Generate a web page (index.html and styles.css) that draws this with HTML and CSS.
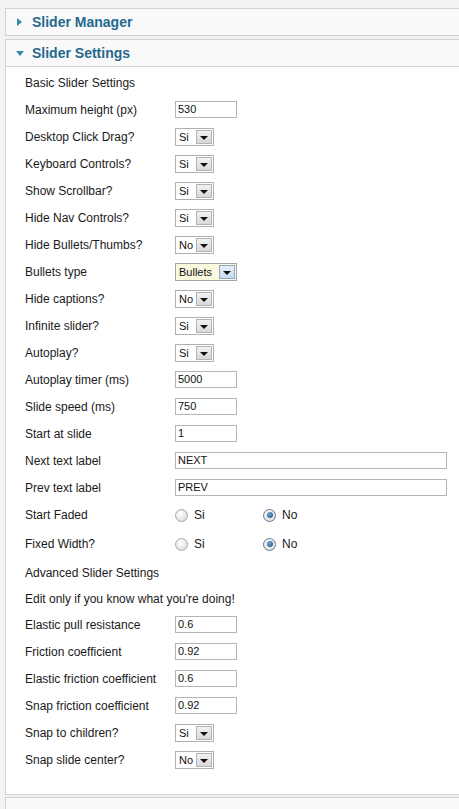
FILE: index.html
```html
<!DOCTYPE html>
<html>
<head>
<meta charset="utf-8">
<link rel="stylesheet" href="styles.css">
</head>
<body>
<div class="page">
  <div class="panel-head closed">
    <span class="tri-right"></span><span class="head-title">Slider Manager</span>
  </div>
  <div class="panel-head open">
    <span class="tri-down"></span><span class="head-title">Slider Settings</span>
  </div>
  <div class="panel-body">
    <div class="row"><span class="label">Basic Slider Settings</span></div>
    <div class="row"><span class="label">Maximum height (px)</span><span class="input">530</span></div>
    <div class="row"><span class="label">Desktop Click Drag?</span><span class="select"><span class="sel-text">Si</span><span class="sel-btn"></span></span></div>
    <div class="row"><span class="label">Keyboard Controls?</span><span class="select"><span class="sel-text">Si</span><span class="sel-btn"></span></span></div>
    <div class="row"><span class="label">Show Scrollbar?</span><span class="select"><span class="sel-text">Si</span><span class="sel-btn"></span></span></div>
    <div class="row"><span class="label">Hide Nav Controls?</span><span class="select"><span class="sel-text">Si</span><span class="sel-btn"></span></span></div>
    <div class="row"><span class="label">Hide Bullets/Thumbs?</span><span class="select"><span class="sel-text">No</span><span class="sel-btn"></span></span></div>
    <div class="row"><span class="label">Bullets type</span><span class="select wide focus"><span class="sel-text">Bullets</span><span class="sel-btn"></span></span></div>
    <div class="row"><span class="label">Hide captions?</span><span class="select"><span class="sel-text">No</span><span class="sel-btn"></span></span></div>
    <div class="row"><span class="label">Infinite slider?</span><span class="select"><span class="sel-text">Si</span><span class="sel-btn"></span></span></div>
    <div class="row"><span class="label">Autoplay?</span><span class="select"><span class="sel-text">Si</span><span class="sel-btn"></span></span></div>
    <div class="row"><span class="label">Autoplay timer (ms)</span><span class="input">5000</span></div>
    <div class="row"><span class="label">Slide speed (ms)</span><span class="input">750</span></div>
    <div class="row"><span class="label">Start at slide</span><span class="input">1</span></div>
    <div class="row"><span class="label">Next text label</span><span class="input long">NEXT</span></div>
    <div class="row"><span class="label">Prev text label</span><span class="input long">PREV</span></div>
    <div class="row radio-row first"><span class="label">Start Faded</span>
      <span class="radio-opt"><span class="radio"></span><span class="radio-text">Si</span></span>
      <span class="radio-opt"><span class="radio checked"></span><span class="radio-text">No</span></span>
    </div>
    <div class="row radio-row second"><span class="label">Fixed Width?</span>
      <span class="radio-opt"><span class="radio"></span><span class="radio-text">Si</span></span>
      <span class="radio-opt"><span class="radio checked"></span><span class="radio-text">No</span></span>
    </div>
    <div class="row"><span class="label">Advanced Slider Settings</span></div>
    <div class="row short"><span class="label">Edit only if you know what you're doing!</span></div>
    <div class="row"><span class="label">Elastic pull resistance</span><span class="input">0.6</span></div>
    <div class="row"><span class="label">Friction coefficient</span><span class="input">0.92</span></div>
    <div class="row"><span class="label">Elastic friction coefficient</span><span class="input">0.6</span></div>
    <div class="row"><span class="label">Snap friction coefficient</span><span class="input">0.92</span></div>
    <div class="row"><span class="label">Snap to children?</span><span class="select"><span class="sel-text">Si</span><span class="sel-btn"></span></span></div>
    <div class="row"><span class="label">Snap slide center?</span><span class="select"><span class="sel-text">No</span><span class="sel-btn"></span></span></div>
  </div>
  <div class="panel-head last"></div>
</div>
</body>
</html>
```
FILE: styles.css
```css
html, body {
  margin: 0;
  padding: 0;
  background: #f3f3f3;
  height: 100%;
  overflow: hidden;
}
.page {
  padding: 8px 0 0 5px;
  font-family: Arial, "Liberation Sans", sans-serif;
}
.panel-head {
  height: 26px;
  background: #f9f9f9;
  border: 1px solid #d2d2d2;
  border-right: none;
  display: flex;
  align-items: center;
  box-sizing: content-box;
}
.panel-head.closed {
  margin-bottom: 3px;
}
.head-title {
  font-size: 14px;
  font-weight: bold;
  color: #25698f;
}
.tri-right {
  width: 0;
  height: 0;
  border-top: 4px solid transparent;
  border-bottom: 4px solid transparent;
  border-left: 5px solid #3a86ad;
  margin-left: 11px;
  margin-right: 10px;
}
.tri-down {
  width: 0;
  height: 0;
  border-left: 4px solid transparent;
  border-right: 4px solid transparent;
  border-top: 5px solid #3a86ad;
  margin-left: 10px;
  margin-right: 8px;
}
.panel-body {
  background: #ffffff;
  border-left: 1px solid #d2d2d2;
  border-bottom: 1px solid #d2d2d2;
  padding: 2px 0 21px 0;
}
.panel-head.last {
  margin-top: 2px;
}
.row {
  height: 27px;
  display: flex;
  align-items: center;
  padding-left: 19px;
  font-size: 12px;
  color: #1a1a1a;
}
.row.short {
  height: 25px;
}
.label {
  width: 150px;
  flex-shrink: 0;
  white-space: nowrap;
}
.input {
  width: 58px;
  height: 15px;
  border: 1px solid #b5b5b5;
  background: #fff;
  font-size: 11px;
  line-height: 15px;
  padding-left: 2px;
  color: #111;
}
.input.long {
  width: 268px;
}
.select {
  width: 33px;
  height: 16px;
  border: 1px solid #b0b0b0;
  background: #fff;
  display: flex;
  align-items: center;
  justify-content: space-between;
  font-size: 11px;
  padding: 0 1px 0 3px;
}
.select.wide {
  width: 56px;
}
.select.focus {
  background: #fbf9de;
  border-color: #a0a6ae;
}
.sel-text {
  color: #111;
}
.sel-btn {
  width: 16px;
  height: 14px;
  border: 1px solid #b3b3b3;
  background: linear-gradient(#f2f2f2, #d8d8d8);
  display: flex;
  align-items: center;
  justify-content: center;
  box-sizing: border-box;
}
.focus .sel-btn {
  background: linear-gradient(#e6eefa, #c9daf0);
  border-color: #8aa6c9;
}
.sel-btn::after {
  content: "";
  width: 0;
  height: 0;
  border-left: 4px solid transparent;
  border-right: 4px solid transparent;
  border-top: 4px solid #111;
  margin-top: 2px;
}
.radio-row.first {
  height: 28px;
}
.radio-row.second {
  height: 30px;
}
.radio-opt {
  display: flex;
  align-items: center;
  width: 88px;
}
.radio {
  width: 11px;
  height: 11px;
  border-radius: 50%;
  border: 1px solid #a8a8a8;
  background: radial-gradient(circle at 40% 35%, #ffffff, #d4d4d4);
  box-sizing: content-box;
  display: flex;
  align-items: center;
  justify-content: center;
}
.radio.checked {
  border-color: #5a7a9a;
}
.radio.checked::after {
  content: "";
  width: 6px;
  height: 6px;
  border-radius: 50%;
  background: radial-gradient(circle at 40% 35%, #6fa7d6, #1f4f7c);
}
.radio-text {
  margin-left: 6px;
  font-size: 12px;
}
```
